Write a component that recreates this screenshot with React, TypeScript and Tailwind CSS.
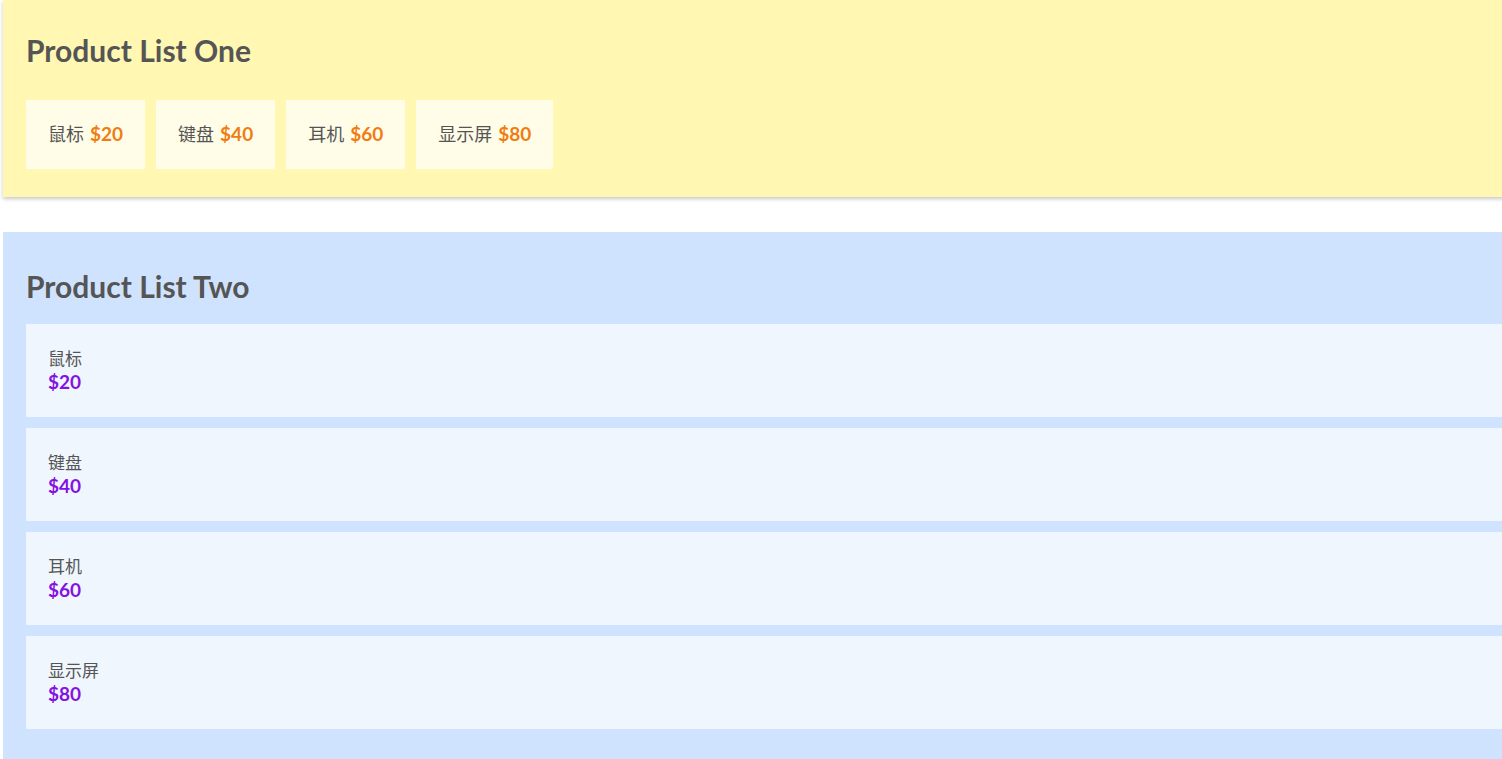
const products = [
  { name: "鼠标", price: 20 },
  { name: "键盘", price: 40 },
  { name: "耳机", price: 60 },
  { name: "显示屏", price: 80 },
];

const font = "font-['Lato','Noto_Sans_CJK_SC',sans-serif]";

export default function App() {
  return (
    <div className={`${font} overflow-hidden bg-white text-[#555] h-[759px]`}>
      <section className="ml-[3px] w-full bg-[#fff7b2] px-[23px] pt-[26px] pb-[28px] shadow-[0_2px_4px_rgba(0,0,0,0.22)]">
        <h2 className="text-[30px] font-bold leading-[48px]">Product List One</h2>
        <div className="mt-[26px] flex gap-[11px]">
          {products.map((p) => (
            <div key={p.name} className="flex h-[69px] items-center bg-[#fffce8] px-[22px] text-[18px]">
              <span>{p.name}</span>
              <span className="ml-[6px] text-[19px] font-bold text-[#ef7d13]">${p.price}</span>
            </div>
          ))}
        </div>
      </section>

      <section className="mt-[35px] ml-[3px] w-full bg-[#d0e3fe] pl-[23px] pt-[26px] pb-[30px]">
        <h2 className="text-[30px] font-bold leading-[56px]">Product List Two</h2>
        <div className="mt-[10px] flex flex-col gap-[11px]">
          {products.map((p) => (
            <div key={p.name} className="flex h-[93px] flex-col justify-center bg-[#eff6fe] px-[22px]">
              <span className="text-[17px] leading-[23px]">{p.name}</span>
              <span className="text-[19px] font-bold leading-[24px] text-[#8412e0]">${p.price}</span>
            </div>
          ))}
        </div>
      </section>
    </div>
  );
}
